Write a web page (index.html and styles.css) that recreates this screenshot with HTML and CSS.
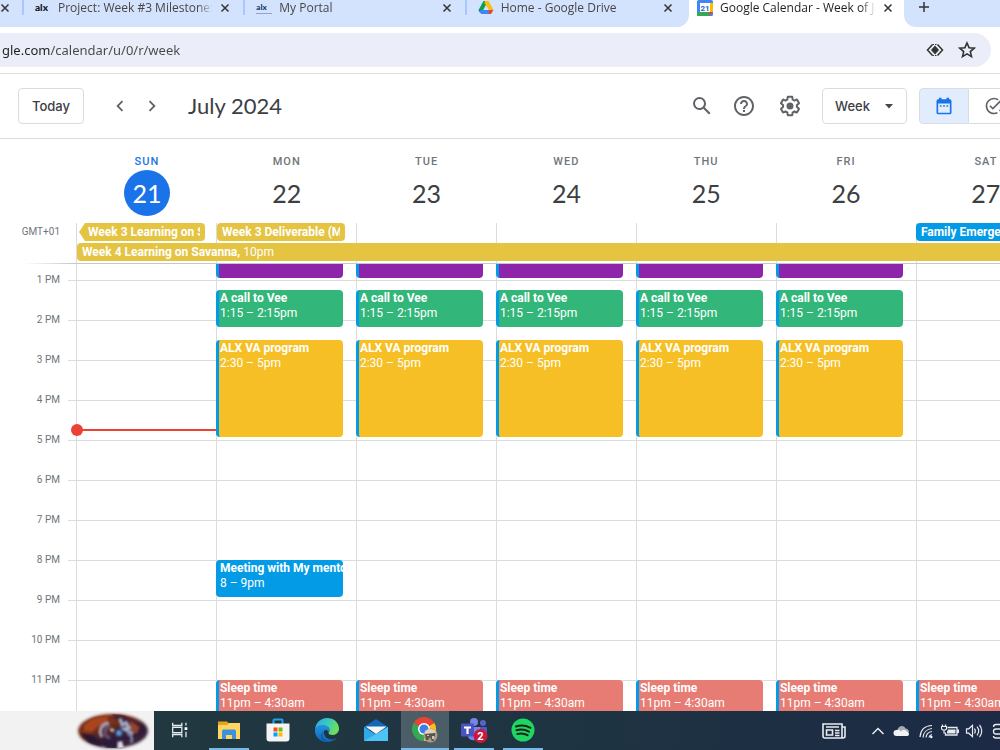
FILE: index.html
```html
<!DOCTYPE html>
<html lang="en">
<head>
<meta charset="utf-8">
<title>Google Calendar - Week of July 21, 2024</title>
<link rel="stylesheet" href="styles.css">
</head>
<body>
<div class="tab-strip">
  <div class="tabs-before">
    <div class="tab tab-cut"><button class="tab-close" aria-label="Close tab"><svg viewBox="0 0 10 10"><path d="M1.500 1.500l7 7M8.500 1.500l-7 7"/></svg></button></div>
    <div class="tab"><span class="favicon alx">al<b>x</b></span><span class="tab-title">Project: Week #3 Milestone:</span><button class="tab-close" aria-label="Close tab"><svg viewBox="0 0 10 10"><path d="M1.500 1.500l7 7M8.500 1.500l-7 7"/></svg></button></div>
    <div class="tab"><span class="favicon alx alx-portal">al<b>x</b></span><span class="tab-title">My Portal</span><button class="tab-close" aria-label="Close tab"><svg viewBox="0 0 10 10"><path d="M1.500 1.500l7 7M8.500 1.500l-7 7"/></svg></button></div>
    <div class="tab"><svg class="favicon" viewBox="0 0 16 16"><path fill="#0f9d58" d="M5.500 1h3L10 4 4 14 1 11.500 0.500 10z"/><path fill="#fbbc04" d="M7 1h3.500l5 9-1.500 1h-3L6.500 3z"/><path fill="#4285f4" d="M3.500 10H12l-1 4H3.500L1 11.500z"/><path fill="#ea4335" d="M11 10h4.500L13 14h-2.500z"/><path fill="#d3e3fd" d="M8 5l2.800 5H5.200z"/></svg><span class="tab-title">Home - Google Drive</span><button class="tab-close" aria-label="Close tab"><svg viewBox="0 0 10 10"><path d="M1.500 1.500l7 7M8.500 1.500l-7 7"/></svg></button></div>
  </div>
  <div class="tab tab-active"><svg class="favicon" viewBox="0 0 16 16"><rect width="16" height="16" rx="1.500" fill="#4285f4"/><path fill="#fbbc04" d="M13 3h3v9h-3z"/><path fill="#34a853" d="M0 12h12v4H1.500A1.500 1.500 0 0 1 0 14.500z"/><path fill="#ea4335" d="M12 12h4l-4 4z"/><path fill="#fff" d="M3 3h10v9H3z"/><text x="8" y="10.500" text-anchor="middle" class="favicon-day">21</text></svg><span class="tab-title">Google Calendar - Week of Ju</span><button class="tab-close" aria-label="Close tab"><svg viewBox="0 0 10 10"><path d="M1.500 1.500l7 7M8.500 1.500l-7 7"/></svg></button></div>
  <div class="tabs-after"><button class="new-tab" aria-label="New tab"><svg viewBox="0 0 12 12"><path d="M6 1v10M1 6h10"/></svg></button></div>
</div>

<div class="toolbar">
  <div class="address">
    <input class="url" type="text" aria-label="Address" value="gle.com/calendar/u/0/r/week">
    <button class="address-btn" aria-label="Lens"><svg viewBox="0 0 18 18"><path d="M6.500 3.500L1.500 9l5 5.500M11.500 3.500l5 5.500-5 5.500" fill="none" stroke="#333" stroke-width="1.500"/><path d="M6.500 3.500h5M6.500 14.500h5" stroke="#333" stroke-width="1" stroke-dasharray="1.500 1"/><path d="M9 4.500L13 9l-4 4.500L5 9z" fill="#333"/></svg></button>
    <button class="address-btn" aria-label="Bookmark"><svg viewBox="0 0 18 18"><path d="M9 2l2.100 4.700 5.100.5-3.900 3.400 1.200 5L9 12.900l-4.500 2.700 1.200-5-3.900-3.400 5.100-.5z" fill="none" stroke="#333" stroke-width="1.600"/></svg></button>
  </div>
</div>

<header class="cal-header">
  <button class="today">Today</button>
  <nav class="pager">
    <button class="icon-btn pager-btn" aria-label="Previous week"><svg viewBox="0 0 24 24"><path d="M15.410 7.410L14 6l-6 6 6 6 1.410-1.410L10.830 12z"/></svg></button>
    <button class="icon-btn pager-btn" aria-label="Next week"><svg viewBox="0 0 24 24"><path d="M10 6L8.590 7.410 13.170 12l-4.580 4.590L10 18l6-6z"/></svg></button>
  </nav>
  <h1 class="month">July 2024</h1>
  <div class="actions">
    <button class="icon-btn" aria-label="Search"><svg viewBox="0 0 24 24"><path d="M20.490 19l-5.730-5.730C15.530 12.200 16 10.910 16 9.500A6.500 6.500 0 1 0 9.500 16c1.410 0 2.700-.47 3.770-1.240L19 20.490 20.490 19zM5 9.500C5 7.010 7.010 5 9.500 5S14 7.010 14 9.500 11.990 14 9.500 14 5 11.990 5 9.500z"/></svg></button>
    <button class="icon-btn" aria-label="Support"><svg viewBox="0 0 24 24"><path d="M11 18h2v-2h-2v2zm1-16C6.480 2 2 6.480 2 12s4.480 10 10 10 10-4.480 10-10S17.520 2 12 2zm0 18c-4.410 0-8-3.590-8-8s3.590-8 8-8 8 3.590 8 8-3.590 8-8 8zm0-14c-2.210 0-4 1.790-4 4h2c0-1.100.9-2 2-2s2 .9 2 2c0 2-3 1.750-3 5h2c0-2.250 3-2.500 3-5 0-2.210-1.790-4-4-4z"/></svg></button>
    <button class="icon-btn settings" aria-label="Settings"><svg viewBox="0 0 24 24"><path d="M13.850 22.250h-3.700c-.74 0-1.360-.54-1.450-1.270l-.27-1.890c-.27-.14-.53-.29-.79-.46l-1.800.72c-.7.26-1.470-.03-1.810-.65L2.200 15.530c-.35-.66-.2-1.440.36-1.880l1.530-1.190c-.01-.15-.02-.3-.02-.46 0-.15.010-.31.020-.46l-1.520-1.190c-.59-.45-.74-1.260-.37-1.880l1.850-3.190c.34-.62 1.110-.9 1.790-.63l1.810.73c.26-.17.52-.32.78-.46l.27-1.910c.09-.7.71-1.250 1.440-1.250h3.700c.74 0 1.360.54 1.450 1.270l.27 1.890c.27.14.53.290.79.460l1.800-.72c.71-.26 1.480.030 1.820.650l1.840 3.180c.36.66.2 1.440-.36 1.880l-1.520 1.190c.010.150.020.300.020.460s-.010.310-.020.460l1.520 1.190c.56.450.72 1.230.37 1.860l-1.860 3.220c-.34.620-1.110.900-1.800.630l-1.800-.72c-.26.170-.52.320-.78.460l-.27 1.910c-.1.680-.72 1.220-1.460 1.220zm-3.230-2h2.760l.37-2.550.530-.22c.440-.18.880-.44 1.340-.78l.450-.34 2.380.960 1.380-2.400-2.030-1.580.070-.56c.030-.260.060-.51.060-.78s-.030-.53-.060-.78l-.07-.56 2.030-1.580-1.390-2.400-2.390.960-.45-.35c-.42-.32-.87-.58-1.330-.77l-.52-.22-.37-2.550h-2.760l-.37 2.550-.53.210c-.44.190-.88.440-1.340.790l-.45.330-2.380-.95-1.390 2.390 2.030 1.580-.07.560a7 7 0 0 0-.06.790c0 .26.020.530.060.780l.070.560-2.030 1.580 1.380 2.400 2.390-.96.450.35c.43.330.86.580 1.330.770l.53.220.38 2.550z"/><circle cx="12" cy="12" r="3.500"/></svg></button>
  </div>
  <label class="view-picker"><select aria-label="View"><option>Week</option></select><svg viewBox="0 0 10 5"><path d="M1 0h8L5 4.500z"/></svg></label>
  <div class="mode">
    <button class="mode-btn mode-on" aria-label="Calendar"><svg viewBox="0 0 24 24"><path d="M19 4h-1V2h-3v2H9V2H6v2H5a2 2 0 0 0-2 2v14a2 2 0 0 0 2 2h14a2 2 0 0 0 2-2V6a2 2 0 0 0-2-2zm0 16H5V9h14zM7 11v2h2v-2zm4 0v2h2v-2zm4 0v2h2v-2z"/></svg></button>
    <button class="mode-btn" aria-label="Tasks"><svg viewBox="0 0 24 24"><path d="M22 5.180L10.590 16.600l-4.240-4.240 1.410-1.410 2.830 2.830 10-10L22 5.180zM12 20c-4.410 0-8-3.590-8-8s3.590-8 8-8c1.570 0 3.040.46 4.280 1.250l1.450-1.450A10.020 10.020 0 0 0 12 2C6.480 2 2 6.480 2 12s4.480 10 10 10c1.730 0 3.360-.44 4.780-1.220l-1.500-1.500c-1 .46-2.110.72-3.280.72zm7.800-8.900c.130.290.200.590.200.900a8 8 0 0 1-2 5.300l1.400 1.400A10 10 0 0 0 22 12c0-.9-.1-1.700-.4-2.500z"/></svg></button>
  </div>
</header>

<main class="week">
  <div class="day-heads">
    <div class="day-head day-today"><span class="dow">SUN</span><span class="date">21</span></div>
    <div class="day-head"><span class="dow">MON</span><span class="date">22</span></div>
    <div class="day-head"><span class="dow">TUE</span><span class="date">23</span></div>
    <div class="day-head"><span class="dow">WED</span><span class="date">24</span></div>
    <div class="day-head"><span class="dow">THU</span><span class="date">25</span></div>
    <div class="day-head"><span class="dow">FRI</span><span class="date">26</span></div>
    <div class="day-head"><span class="dow">SAT</span><span class="date">27</span></div>
  </div>

  <div class="all-day">
    <span class="zone">GMT+01</span>
    <div class="all-day-grid">
      <i class="rule"></i><i class="rule"></i><i class="rule"></i><i class="rule"></i><i class="rule"></i><i class="rule"></i><i class="rule"></i>
      <div class="chip chip-sun"><b>Week 3 Learning on Savanna</b></div>
      <div class="chip chip-mon"><b>Week 3 Deliverable (Milestone)</b></div>
      <div class="chip chip-sat"><b>Family Emergency</b></div>
      <div class="chip chip-long"><b>Week 4 Learning on Savanna,</b> 10pm</div>
    </div>
  </div>

  <div class="timeline">
    <ol class="hours"><li>1 PM</li><li>2 PM</li><li>3 PM</li><li>4 PM</li><li>5 PM</li><li>6 PM</li><li>7 PM</li><li>8 PM</li><li>9 PM</li><li>10 PM</li><li>11 PM</li></ol>
    <div class="days">
      <div class="day"><div class="now"></div></div>
      <div class="day">
        <div class="event noon"></div>
        <div class="event call"><b>A call to Vee</b>1:15 – 2:15pm</div>
        <div class="event alx-va"><b>ALX VA program</b>2:30 – 5pm</div>
        <div class="event meeting"><b>Meeting with My mentor</b>8 – 9pm</div>
        <div class="event sleep"><b>Sleep time</b>11pm – 4:30am</div>
      </div>
      <div class="day">
        <div class="event noon"></div>
        <div class="event call"><b>A call to Vee</b>1:15 – 2:15pm</div>
        <div class="event alx-va"><b>ALX VA program</b>2:30 – 5pm</div>
        <div class="event sleep"><b>Sleep time</b>11pm – 4:30am</div>
      </div>
      <div class="day">
        <div class="event noon"></div>
        <div class="event call"><b>A call to Vee</b>1:15 – 2:15pm</div>
        <div class="event alx-va"><b>ALX VA program</b>2:30 – 5pm</div>
        <div class="event sleep"><b>Sleep time</b>11pm – 4:30am</div>
      </div>
      <div class="day">
        <div class="event noon"></div>
        <div class="event call"><b>A call to Vee</b>1:15 – 2:15pm</div>
        <div class="event alx-va"><b>ALX VA program</b>2:30 – 5pm</div>
        <div class="event sleep"><b>Sleep time</b>11pm – 4:30am</div>
      </div>
      <div class="day">
        <div class="event noon"></div>
        <div class="event call"><b>A call to Vee</b>1:15 – 2:15pm</div>
        <div class="event alx-va"><b>ALX VA program</b>2:30 – 5pm</div>
        <div class="event sleep"><b>Sleep time</b>11pm – 4:30am</div>
      </div>
      <div class="day">
        <div class="event sleep"><b>Sleep time</b>11pm – 4:30am</div>
      </div>
    </div>
  </div>
</main>

<footer class="taskbar">
  <div class="task-search">
    <svg viewBox="0 0 76 39" aria-hidden="true">
      <defs>
        <linearGradient id="nebula" x1="0" y1="0" x2=".7" y2="1"><stop offset="0" stop-color="#6b2a18"/><stop offset=".4" stop-color="#7a3018"/><stop offset=".7" stop-color="#2f1c38"/><stop offset="1" stop-color="#3a2436"/></linearGradient>
        <filter id="soft" x="-20%" y="-20%" width="140%" height="140%"><feGaussianBlur stdDeviation="1.600"/></filter>
        <filter id="softer" x="-30%" y="-30%" width="160%" height="160%"><feGaussianBlur stdDeviation=".9"/></filter>
        <clipPath id="oval"><ellipse cx="38" cy="20" rx="34" ry="17"/></clipPath>
      </defs>
      <ellipse cx="38" cy="20" rx="35" ry="17" fill="url(#nebula)" filter="url(#soft)"/>
      <g clip-path="url(#oval)" filter="url(#softer)">
        <path d="M9 15C14 8 24 4 34 6l-3 6-8 3-6 6-8-1z" fill="#a8441c"/>
        <path d="M36 3l12 1 10 5 8 8-6 6-8-2-6-8z" fill="#4a2233"/>
        <path d="M55 10l9 6-2 7-7-4z" fill="#93452c"/>
        <path d="M5 22l14 3 8 10-12-3z" fill="#25142f"/>
        <path d="M30 27l12 3 1 8-12-1z" fill="#2b1a3c"/>
        <path d="M34 12c-8 1-11 8-7 14" fill="none" stroke="#a7a2b6" stroke-width="3"/>
        <path d="M35 15c-5 1-6 6-4 10l4 2" fill="none" stroke="#5d5878" stroke-width="3"/>
        <path d="M45 8l2 6 4-2 3 5-5 1 9 5" fill="none" stroke="#a4aecb" stroke-width="3"/>
        <path d="M52 22c5 2 6 6 4 10" fill="none" stroke="#7b7d9d" stroke-width="3"/>
        <circle cx="44" cy="22" r="5" fill="#26345e"/>
        <circle cx="44" cy="22" r="2.500" fill="#6d97cf"/>
        <circle cx="37" cy="19" r="1.600" fill="#fff0d2"/>
        <path d="M43 31l4-1 2 8h-6z" fill="#e0dbe8"/>
      </g>
    </svg>
  </div>
  <nav class="apps">
    <button class="app" aria-label="Task View"><svg viewBox="0 0 24 24" fill="none" stroke="#e8ecee" stroke-width="1.400"><path d="M4 4v3h10V4M4 20v-3h10v3M4 9h10v6H4zM18.500 4v3M18.500 14v6"/><path d="M17 9h3v3h-3z" fill="#fff" stroke="none"/></svg></button>
    <button class="app app-open" aria-label="File Explorer"><svg viewBox="0 0 24 24"><path d="M1 3.500h9l2 2h10V21H1z" fill="#e8a317"/><path d="M1 7h9l2-2h11v16H1z" fill="#ffd661"/><path d="M5 21v-8a1.500 1.500 0 0 1 1.500-1.500h11A1.500 1.500 0 0 1 19 13v8h-4v-4H9v4z" fill="#3e90da"/></svg></button>
    <button class="app" aria-label="Store"><svg viewBox="0 0 24 24"><path d="M7.500 6V2.500a1 1 0 0 1 1-1h7a1 1 0 0 1 1 1V6" fill="none" stroke="#1aa3e8" stroke-width="2"/><path d="M.5 5.500h23v15a3 3 0 0 1-3 3h-17a3 3 0 0 1-3-3z" fill="#f4f4f4"/><path d="M7.500 9.500H11.500v4H7.500z" fill="#f25022"/><path d="M12.500 9.500h4v4h-4z" fill="#7fba00"/><path d="M7.500 14.500h4v4h-4z" fill="#00a4ef"/><path d="M12.500 14.500h4v4h-4z" fill="#ffb900"/></svg></button>
    <button class="app" aria-label="Edge"><svg viewBox="0 0 24 24"><defs><linearGradient id="edgeA" x1="0" y1="0" x2="1" y2=".4"><stop offset="0" stop-color="#2aa6e6"/><stop offset=".5" stop-color="#36c6c8"/><stop offset="1" stop-color="#6be05a"/></linearGradient><linearGradient id="edgeB" x1="0" y1="0" x2="0" y2="1"><stop offset="0" stop-color="#2294dc"/><stop offset="1" stop-color="#1263b8"/></linearGradient></defs><path d="M0 11.500C.5 5 5.500 0 12 0c7 0 12 4.800 12 10.500 0 4-3 6.500-6.500 6.500-2.500 0-4-1-4-2 0-.7 1-1.200 1-3C14.500 9 11 7.500 8 7.500c-4 0-7 1.800-8 4z" fill="url(#edgeA)"/><path d="M0 12c.5-3.500 4-5 7.500-5 4 0 7 2.200 7 5 0 1-.5 1.700-1 2.200-.6-1.700-2-2.500-3.500-2-2 .700-2 6.300 3.500 8.600 3.500 1.300 6 .5 8.700-1C20 22.500 16 24 12 24 5 24-.5 18.500 0 12z" fill="url(#edgeB)"/><path d="M10 12.200C5 15 7 22 13 23.900 5 23.500 4 15 10 12.200z" fill="#0c4d97"/></svg></button>
    <button class="app" aria-label="Mail"><svg viewBox="0 0 24 24"><path d="M0 9l12-8 12 8v3H0z" fill="#1267b8"/><path d="M0 9l12 7.500L24 9v14H0z" fill="#2fa9e8"/><path d="M24 9v14H0z" fill="#4cc4f5"/><path d="M1.500 8.500h21L12 16z" fill="#f5f5f5"/></svg></button>
    <button class="app app-open app-current" aria-label="Chrome"><svg viewBox="0 0 26 26"><path d="M12 12L1.600 6A12 12 0 0 1 22.400 6z" fill="#ea4335"/><path d="M12 12L22.400 6A12 12 0 0 1 12 24z" fill="#fbc116"/><path d="M12 12v12A12 12 0 0 1 1.600 6z" fill="#34a853"/><circle cx="12" cy="12" r="6" fill="#fff"/><circle cx="12" cy="12" r="4.500" fill="#3b7ded"/><circle cx="18.500" cy="18.500" r="7" fill="#a69b88"/><path d="M12.500 15c3-4 9-4 12 0l-4 1.500-7 .5z" fill="#dcd3bf"/><path d="M13 17l10-1v3l-2 1 1 4h-2l-2-4-2 3h-2z" fill="#5c554c"/><path d="M15 18h2v1h-2zM20 19h2v3h-2z" fill="#cfc6b4"/></svg></button>
    <button class="app app-open" aria-label="Teams"><svg viewBox="0 0 28 26"><circle cx="14" cy="5" r="4" fill="#7b83eb"/><circle cx="23" cy="6" r="3" fill="#5b63c5"/><path d="M18 10h8a1 1 0 0 1 1 1v6a5 5 0 0 1-9 3z" fill="#5059c9"/><path d="M8 10h12v8a6.500 6.500 0 0 1-12 2z" fill="#7b83eb"/><rect x="1" y="6.500" width="13" height="13" rx="1.200" fill="#4b53bc"/><path d="M4 9.500h7v2H8.600V17H6.400v-5.500H4z" fill="#fff"/><circle cx="20.500" cy="19" r="7" fill="#c8193c"/><text x="20.500" y="23" text-anchor="middle" class="badge-count">2</text></svg></button>
    <button class="app app-open" aria-label="Spotify"><svg viewBox="0 0 24 24"><circle cx="12" cy="12" r="11.500" fill="#1ed760"/><path d="M5 8.500c5-1.500 10-1 14.500 1.300M5.500 12.300c4-1.200 8.500-.8 12.500 1.400M6.300 16c3.500-1 7-.6 10.300 1.200" fill="none" stroke="#14251c" stroke-width="2" stroke-linecap="round"/></svg></button>
  </nav>
  <div class="tray">
    <button class="tray-btn tray-news" aria-label="News"><svg viewBox="0 0 24 18" fill="none" stroke="#e8ebf0" stroke-width="1.600"><path d="M1 2h19v14H3a2 2 0 0 1-2-2zM20 5h3v9a2 2 0 0 1-2 2h-2"/><path d="M4.500 8h6v5h-6zM4 5h13M13 8.500h4.500M13 11h4.500M13 13.500h4.500"/></svg></button>
    <button class="tray-btn" aria-label="Hidden icons"><svg viewBox="0 0 18 18" fill="none" stroke="#e8ebf0" stroke-width="1.500"><path d="M3.500 12L9 6.500l5.500 5.500"/></svg></button>
    <button class="tray-btn" aria-label="OneDrive"><svg viewBox="0 0 18 18"><path d="M5 10a4 4 0 0 1 7.500-3.500A4 4 0 0 1 16 10z" fill="#a8abb3"/><path d="M3.500 14a3 3 0 0 1 0-6c2-.5 3.500 0 4.500 1.500C9.500 7.500 13 7.500 14 9.700a2.200 2.200 0 0 1 .5 4.300z" fill="#f1f2f4"/></svg></button>
    <button class="tray-btn" aria-label="Wi-Fi"><svg viewBox="0 0 18 18" fill="none" stroke="#e8ebf0" stroke-width="1.200"><path d="M3 15C3.500 8 8 3.800 15 3.500M6 15.500c.3-5 4-8.500 9-9M9 15.500c.3-3 2.500-5.500 6-6M12 15.500c.2-1.500 1.500-2.600 3-3"/><circle cx="14.300" cy="15" r="1.200" fill="#fff" stroke="none"/></svg></button>
    <button class="tray-btn" aria-label="Battery"><svg viewBox="0 0 18 18"><path d="M6.500 5.500h9.500v7.500H4.500v-2" fill="none" stroke="#e8ebf0" stroke-width="1.300"/><path d="M7 7.500h7.500v4H6V10zM16 7.500h2v3.500h-2z" fill="#e8ebf0"/><path d="M1.500 2.500v2M4.500 2.500v2M.5 4.500h5v2.500l-1.200 1H1.700L.5 7zM3 8v3h2" fill="none" stroke="#e8ebf0" stroke-width="1.200"/></svg></button>
    <button class="tray-btn" aria-label="Volume"><svg viewBox="0 0 18 18" fill="none" stroke="#e8ebf0" stroke-width="1.200"><path d="M1.500 6.800h2.300L7.500 3.300v11.400l-3.700-3.500H1.500zM9.500 6.500c1 1.500 1 3.500 0 5M12 4.700c2 2.500 2 6.100 0 8.600M14.500 3c3 3.500 3 8.500 0 12"/></svg></button>
    <button class="tray-btn" aria-label="Display"><svg viewBox="0 0 18 18" fill="none" stroke="#e8ebf0" stroke-width="1.300"><path d="M16 2.500H7Q4.500 2.500 4.500 5M16 7H7q-2.500 0-2.500 2.500T7 12h9M4.500 14q0 2 2.500 2h9"/></svg></button>
  </div>
</footer>
</body>
</html>
```
FILE: styles.css
```css
* { box-sizing: border-box; }

body {
  margin: 0;
  height: 100vh;
  display: flex;
  flex-direction: column;
  overflow: hidden;
  background: #fff;
  color: #3c4043;
  font-family: Roboto, "Liberation Sans", sans-serif;
  font-size: 12px;
}

button, select, input { font: inherit; color: inherit; }
button { display: flex; align-items: center; justify-content: center; flex: none; margin: 0; padding: 0; border: 0; background: none; }
svg { display: block; flex: none; }

/* Browser tabs */
.tab-strip { display: flex; flex: none; height: 27px; font-family: "Open Sans", "Noto Sans", sans-serif; color: #474747; }
.tabs-before { flex: 1; display: grid; grid-template-columns: 24px repeat(3, minmax(0, 1fr)); padding-right: 1px; background: #d3e3fd; border-radius: 0 0 12px 0; }
.tab { display: flex; align-items: center; gap: 7px; min-width: 0; height: 15px; padding: 0 13px 0 11px; border-right: 2px solid #a8c7fa; }
.tabs-before .tab:last-child { border-right-color: transparent; }
.tab-cut { padding: 0; }
.tab-active { flex: 0 0 215px; padding: 0 11px 0 8px; border: 0; color: #1f1f1f; }
.tab-title { flex: 1; overflow: hidden; white-space: nowrap; line-height: 16px; mask-image: linear-gradient(to right, #000 90%, transparent); }
.tab-close { width: 10px; height: 10px; }
.tab-close svg { width: 10px; height: 10px; stroke: #333; stroke-width: 1.5; }
.favicon { flex: none; width: 16px; height: 16px; }
.favicon-day { font: 700 8px Roboto, sans-serif; fill: #1967d2; }
.alx { font: 900 10px/14px Lato, sans-serif; color: #10151d; }
.alx-portal { height: 12px; border-bottom: 1px solid #8ba4d0; font-size: 8px; line-height: 10px; color: #14356f; }
.tabs-after { flex: 0 0 96px; background: #d3e3fd; border-radius: 0 0 0 12px; }
.new-tab { width: 40px; height: 14px; }
.new-tab svg { width: 12px; height: 12px; stroke: #333; stroke-width: 1.5; }

/* Address bar */
.toolbar { flex: none; padding: 6px 9px 6px 0; border-bottom: 1px solid #dfe1e5; }
.address { display: flex; align-items: center; gap: 14px; height: 34px; padding-right: 15px; background: #ebeef8; border-radius: 0 17px 17px 0; }
.url { flex: 1; min-width: 0; padding: 0 0 0 2px; border: 0; outline: 0; background: linear-gradient(to right, #1f1f1f 50px, #474747 50px); background-clip: text; -webkit-background-clip: text; color: transparent; font: 13px "Noto Sans", "Open Sans", sans-serif; }
.address-btn, .address-btn svg { width: 18px; height: 18px; }

/* Calendar header */
.cal-header { display: flex; align-items: center; flex: none; height: 65px; padding-left: 18px; border-bottom: 1px solid #dadce0; overflow: hidden; }
.today { width: 66px; height: 36px; border: 1px solid #dadce0; border-radius: 4px; font: 500 13px Inter, sans-serif; }
.pager { display: flex; margin: 0 20px; }
.pager-btn { width: 32px; }
.icon-btn svg { width: 24px; height: 24px; fill: #5f6368; }
.pager-btn svg { width: 22px; height: 22px; }
.month { flex: 1; margin: 0; font: 400 22px/28px Lato, sans-serif; }
.actions { display: flex; gap: 18px; margin-right: 20px; }
.settings { margin-left: 4px; }
.view-picker { position: relative; flex: none; }
.view-picker select { appearance: none; width: 85px; height: 36px; padding: 0 12px; border: 1px solid #dadce0; border-radius: 4px; background: #fff; font: 500 13px Inter, sans-serif; }
.view-picker svg { position: absolute; right: 13px; top: 16px; width: 10px; height: 5px; fill: #444746; }
.mode { display: flex; flex: none; width: 81px; margin-left: 12px; overflow: hidden; }
.mode-btn { width: 50px; height: 36px; border: 1px solid #dadce0; border-left: 0; }
.mode-btn svg { width: 20px; height: 20px; fill: #5f6368; }
.mode-on { background: #e1edfc; border-left: 1px solid #dadce0; border-radius: 4px 0 0 4px; }
.mode-on svg { fill: #1a73e8; }

/* Week view: seven equal days, the last one runs past the edge */
.week { flex: 1; min-height: 0; display: flex; flex-direction: column; overflow: hidden; }
.day-heads, .all-day-grid, .days { display: grid; grid-template-columns: repeat(7, 15.15%); }
.day-heads { flex: none; margin-left: 77px; height: 83px; padding-top: 15px; }
.day-head { display: flex; flex-direction: column; align-items: center; color: #70757a; }
.dow { font-size: 11px; font-weight: 500; line-height: 16px; letter-spacing: 1px; }
.date { display: grid; place-items: center; width: 46px; height: 46px; border-radius: 50%; color: #3c4043; font: 400 25px Lato, sans-serif; }
.day-today .dow { color: #1a73e8; }
.day-today .date { background: #1a73e8; color: #fff; }

.all-day { flex: none; display: flex; height: 41px; }
.zone { flex: 0 0 76px; padding-right: 16px; text-align: right; font-size: 10px; line-height: 20px; color: #70757a; }
.all-day-grid { flex: 1; min-width: 0; grid-template-rows: 18px 18px; row-gap: 2px; padding-top: 1px; }
.rule { grid-row: 1 / 3; border-left: 1px solid #dadce0; margin-bottom: -2px; }
.rule:nth-child(1) { grid-column: 1; }
.rule:nth-child(2) { grid-column: 2; }
.rule:nth-child(3) { grid-column: 3; }
.rule:nth-child(4) { grid-column: 4; }
.rule:nth-child(5) { grid-column: 5; }
.rule:nth-child(6) { grid-column: 6; }
.rule:nth-child(7) { grid-column: 7; }
.chip { grid-row: 1; margin: 0 11px 0 1px; padding: 0 5px; overflow: hidden; white-space: nowrap; border-radius: 4px; background: #e4c441; color: #fff; line-height: 18px; }
.chip b { display: inline-block; vertical-align: top; max-width: 100%; overflow: hidden; }
.chip-sun { grid-column: 1; margin-left: 3px; padding-left: 9px; clip-path: polygon(0 50%, 6px 0, 100% 0, 100% 100%, 6px 100%); }
.chip-mon { grid-column: 2; }
.chip-sat { grid-column: 7; margin-left: 0; background: #039be5; }
.chip-long { grid-column: 1 / 8; grid-row: 2; }

.timeline { position: relative; flex: 1; min-height: 0; display: flex; overflow: hidden; background: linear-gradient(#dadce0 1px, transparent 1px) 68px 17px / 100% 40px repeat-y; }
.timeline::before { content: ""; position: absolute; z-index: 1; left: 24px; right: 0; top: 0; height: 1px; background: linear-gradient(to right, transparent, #c4c7cb 50px); }
.hours { flex: 0 0 76px; margin: -3px 0 0; padding: 0 16px 0 0; list-style: none; text-align: right; color: #70757a; font-size: 10px; line-height: 40px; background: linear-gradient(to right, #fff 68px, transparent 68px); }
.days { flex: 1; min-width: 0; }
/* One row is a quarter of an hour; the first row is the part before 1 PM */
.day { display: grid; grid-template-columns: minmax(0, 1fr); grid-template-rows: 17px repeat(44, 10px); border-left: 1px solid #dadce0; }
.event { margin: 0 13px 3px -1px; padding: 1px 0 0 1px; overflow: hidden; white-space: nowrap; border-left: 3px solid #039be5; border-radius: 4px; color: #fff; line-height: 15px; }
.event b { display: block; }
.noon { grid-row: 1; margin-bottom: 2px; border-radius: 0 0 4px 4px; background: #8e24aa; }
.call { grid-row: 3 / span 4; background: #33b679; }
.alx-va { grid-row: 8 / span 10; background: #f6bf26; }
.meeting { grid-row: 30 / span 4; background: #039be5; }
.sleep { grid-row: 42 / span 4; background: #e67c73; }
.now { grid-row: 17; position: relative; height: 2px; margin-top: -1px; background: #ea4335; }
.now::before { content: ""; position: absolute; left: -6px; top: -5px; width: 12px; height: 12px; border-radius: 50%; background: #ea4335; }

/* Taskbar */
.taskbar { flex: none; display: flex; height: 39px; overflow: hidden; background: linear-gradient(to right, #223a40, #1e3342 60%, #1c2a45); }
.task-search { flex: 0 0 154px; display: flex; justify-content: flex-end; padding-right: 3px; background: #f2f2f2; }
.task-search svg { width: 76px; height: 39px; }
.apps { display: flex; gap: 1px; margin-left: 2px; }
.app { width: 48px; height: 39px; border-bottom: 2px solid transparent; }
.app svg { width: 24px; height: 24px; }
.app-open { background-image: linear-gradient(#76b9ed, #76b9ed); background-size: 40px 2px; background-position: center bottom; background-repeat: no-repeat; background-origin: border-box; }
.app-current { background-color: #4b5d66; background-size: 48px 2px; }
.app:first-child svg { width: 22px; height: 22px; }
.app:nth-child(6) svg { width: 26px; height: 26px; }
.app:nth-child(7) svg { width: 28px; height: 26px; }
.badge-count { font: 700 11px Roboto, sans-serif; fill: #fff; }
.tray { display: flex; align-items: center; margin-left: auto; margin-right: -10px; }
.tray-btn { width: 24px; height: 39px; }
.tray-btn svg { width: 18px; height: 18px; }
.tray-news { margin-right: 20px; }
.tray-news svg { width: 24px; }
```
